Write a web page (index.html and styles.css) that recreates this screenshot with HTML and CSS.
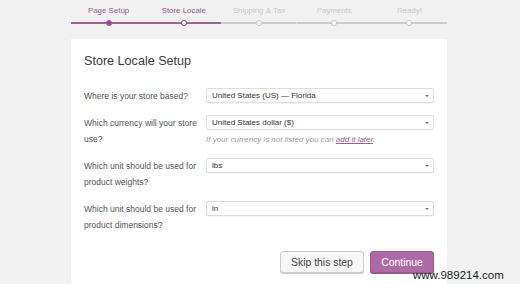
FILE: index.html
```html
<!DOCTYPE html>
<html>
<head>
<meta charset="utf-8">
<link rel="stylesheet" href="styles.css">
</head>
<body>
<div class="wrap">
  <ol class="steps">
    <li class="step done"><span class="step-label">Page Setup</span><span class="track"><span class="dot"></span></span></li>
    <li class="step active"><span class="step-label">Store Locale</span><span class="track"><span class="dot"></span></span></li>
    <li class="step"><span class="step-label">Shipping &amp; Tax</span><span class="track"><span class="dot"></span></span></li>
    <li class="step"><span class="step-label">Payments</span><span class="track"><span class="dot"></span></span></li>
    <li class="step"><span class="step-label">Ready!</span><span class="track"><span class="dot"></span></span></li>
  </ol>
  <div class="card">
    <h1 class="title">Store Locale Setup</h1>
    <div class="form">
      <div class="row">
        <div class="label">Where is your store based?</div>
        <div class="field">
          <div class="select"><span class="value">United States (US) — Florida</span><span class="caret"></span></div>
        </div>
      </div>
      <div class="row">
        <div class="label">Which currency will your store use?</div>
        <div class="field">
          <div class="select"><span class="value">United States dollar ($)</span><span class="caret"></span></div>
          <p class="help">If your currency is not listed you can <a class="link" href="#">add it later</a>.</p>
        </div>
      </div>
      <div class="row">
        <div class="label">Which unit should be used for product weights?</div>
        <div class="field">
          <div class="select"><span class="value">lbs</span><span class="caret"></span></div>
        </div>
      </div>
      <div class="row">
        <div class="label">Which unit should be used for product dimensions?</div>
        <div class="field">
          <div class="select"><span class="value">in</span><span class="caret"></span></div>
        </div>
      </div>
    </div>
    <div class="actions">
      <button class="btn btn-skip">Skip this step</button>
      <button class="btn btn-primary">Continue</button>
    </div>
  </div>
</div>
<div class="watermark">www.989214.com</div>
</body>
</html>
```

FILE: styles.css
```css
html, body {
  margin: 0;
  padding: 0;
}
body {
  background: #f1f1f1;
  font-family: "Liberation Sans", Arial, sans-serif;
  width: 520px;
  height: 284px;
  overflow: hidden;
  position: relative;
}
.wrap {
  margin-left: 71px;
  width: 376px;
}
.steps {
  list-style: none;
  margin: 0;
  padding: 5px 0 0 0;
  display: grid;
  grid-template-columns: repeat(5, 1fr);
}
.step {
  display: flex;
  flex-direction: column;
  align-items: stretch;
  text-align: center;
}
.step-label {
  font-size: 7.9px;
  line-height: 12px;
  color: #c8c8c8;
}
.track {
  margin-top: 2px;
  height: 8px;
  display: flex;
  align-items: center;
  justify-content: center;
  background: linear-gradient(#cccccc, #cccccc) center / 100% 2px no-repeat;
}
.dot {
  width: 4px;
  height: 4px;
  border-radius: 50%;
  border: 1.5px solid #c4c4c4;
  background: #ffffff;
}
.step.done .step-label,
.step.active .step-label {
  color: #9c5b92;
}
.step.done .track,
.step.active .track {
  background: linear-gradient(#a0619a, #a0619a) center / 100% 2px no-repeat;
}
.step.done .dot {
  background: #8f4f86;
  border-color: #a0619a;
}
.step.active .dot {
  background: #ffffff;
  border-color: #8f4f86;
}
.card {
  margin-top: 12px;
  background: #ffffff;
  padding: 12px 13px 0 13px;
  height: 245px;
  box-sizing: border-box;
}
.title {
  margin: 0;
  font-size: 12.6px;
  line-height: 20px;
  font-weight: normal;
  color: #3c3c3c;
}
.form {
  margin-top: 17px;
  display: flex;
  flex-direction: column;
  gap: 11px;
}
.row {
  display: grid;
  grid-template-columns: 116px 228px;
  column-gap: 6px;
  align-items: start;
}
.label {
  font-size: 8.5px;
  line-height: 16px;
  color: #555555;
}
.select {
  height: 15px;
  box-sizing: border-box;
  border: 1px solid #dddddd;
  border-radius: 2px;
  background: #ffffff;
  box-shadow: 0 1px 1px rgba(0, 0, 0, 0.04);
  display: flex;
  align-items: center;
  padding: 0 4px 0 5px;
}
.value {
  font-size: 8px;
  color: #333333;
  white-space: nowrap;
}
.caret {
  margin-left: auto;
  width: 0;
  height: 0;
  border-left: 2px solid transparent;
  border-right: 2px solid transparent;
  border-top: 2.5px solid #777777;
}
.help {
  margin: 4px 0 0 0;
  font-size: 8px;
  line-height: 12px;
  font-style: italic;
  color: #a0a0a0;
}
.link {
  color: #9c5b92;
  text-decoration: underline;
}
.actions {
  margin-top: 18px;
  display: flex;
  justify-content: flex-end;
  gap: 6px;
}
.btn {
  height: 22px;
  box-sizing: border-box;
  border-radius: 3px;
  font-family: "Liberation Sans", Arial, sans-serif;
  font-size: 10.4px;
  padding: 0;
  margin: 0;
}
.btn-skip {
  width: 84px;
  background: #f7f7f7;
  border: 1px solid #cccccc;
  color: #444444;
  box-shadow: 0 1px 0 #cccccc;
}
.btn-primary {
  width: 64px;
  background: #ad6aa5;
  border: 1px solid #9a5a92;
  color: #ffffff;
  box-shadow: 0 1px 0 #935a8c;
}
.watermark {
  position: absolute;
  left: 413px;
  top: 269px;
  font-family: "Liberation Sans", Arial, sans-serif;
  font-size: 11.5px;
  line-height: 12px;
  color: #1a1a1a;
}
```
